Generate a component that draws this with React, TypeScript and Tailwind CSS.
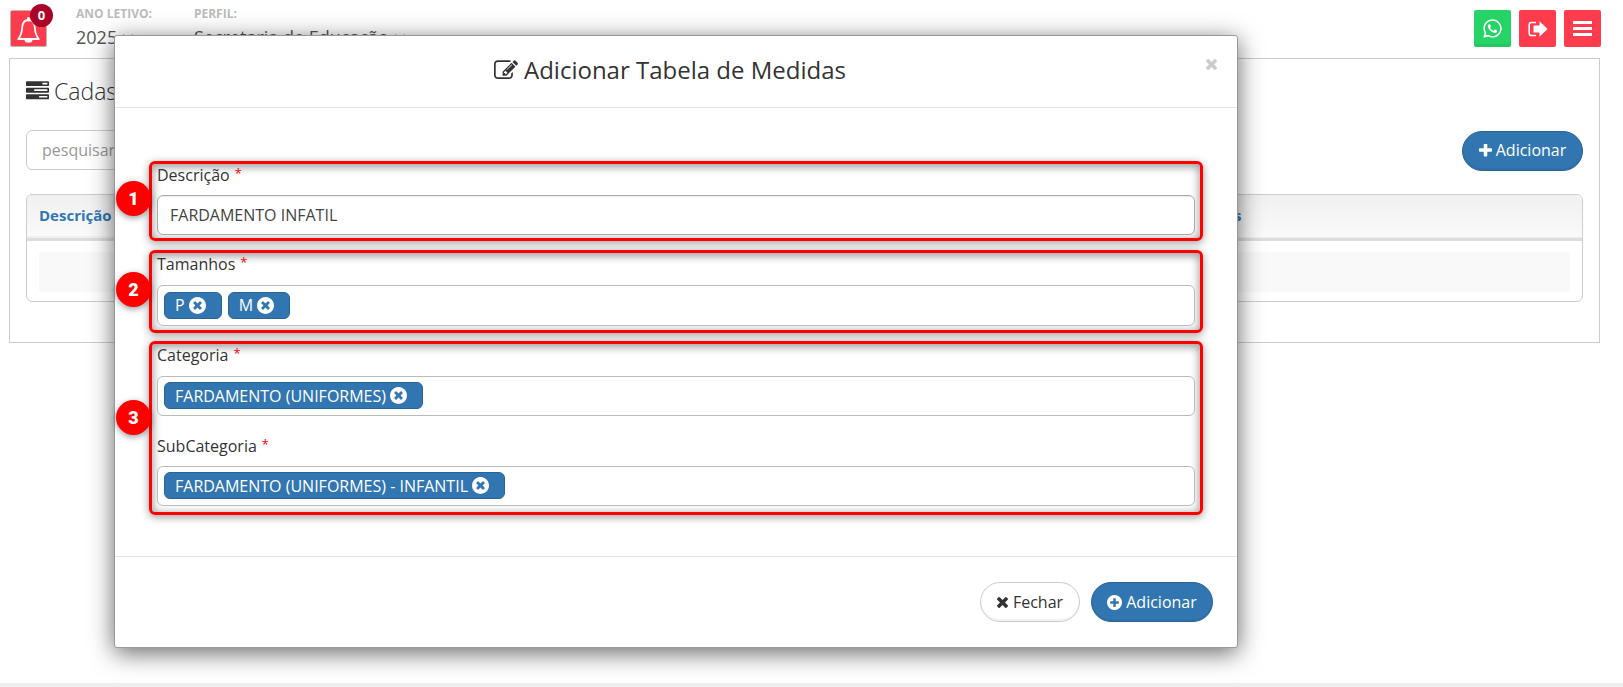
import React from "react";
import { FaWhatsapp } from "react-icons/fa";

const CIRCLE =
  "M1664 896q0 209-103 385.5t-279.5 279.5-385.5 103-385.5-103-279.5-279.5-103-385.5 103-385.5 279.5-279.5 385.5-103 385.5 103 279.5 279.5 103 385.5z";

const PATHS = {
  tasks:
    "M1024 1408h640v-128h-640v128zm-384-512h1024v-128h-1024v128zm640-512h384v-128h-384v128zm512 832v256q0 26-19 45t-45 19h-1664q-26 0-45-19t-19-45v-256q0-26 19-45t45-19h1664q26 0 45 19t19 45zm0-512v256q0 26-19 45t-45 19h-1664q-26 0-45-19t-19-45v-256q0-26 19-45t45-19h1664q26 0 45 19t19 45zm0-512v256q0 26-19 45t-45 19h-1664q-26 0-45-19t-19-45v-256q0-26 19-45t45-19h1664q26 0 45 19t19 45z",
  edit: "M888 1184l116-116-152-152-116 116v56h96v96h56zm440-720q-16-16-33 1l-350 350q-17 17-1 33t33-1l350-350q17-17 1-33zm80 594v190q0 119-84.5 203.5t-203.5 84.5h-832q-119 0-203.5-84.5t-84.5-203.5v-832q0-119 84.5-203.5t203.5-84.5h832q63 0 117 25 15 7 18 23 3 17-9 29l-49 49q-14 14-32 8-23-6-45-6h-832q-66 0-113 47t-47 113v832q0 66 47 113t113 47h832q66 0 113-47t47-113v-126q0-13 9-22l64-64q15-15 35-7t20 29zm-96-738l288 288-672 672h-288v-288zm444 132l-92 92-288-288 92-92q28-28 68-28t68 28l152 152q28 28 28 68t-28 68z",
  timesCircle:
    CIRCLE +
    "M1277 1122q0-26-19-45l-181-181 181-181q19-19 19-45 0-27-19-46l-90-90q-19-19-46-19-26 0-45 19l-181 181-181-181q-19-19-45-19-27 0-46 19l-90 90q-19 19-19 46 0 26 19 45l181 181-181 181q-19 19-19 45 0 27 19 46l90 90q19 19 46 19 26 0 45-19l181-181 181 181q19 19 45 19 27 0 46-19l90-90q19-19 19-46z",
  plusCircle:
    CIRCLE +
    "M1344 960v-128q0-26-19-45t-45-19h-256v-256q0-26-19-45t-45-19h-128q-26 0-45 19t-19 45v256h-256q-26 0-45 19t-19 45v128q0 26 19 45t45 19h256v256q0 26 19 45t45 19h128q26 0 45-19t19-45v-256h256q26 0 45-19t19-45z",
  plus: "M1600 736v192q0 40-28 68t-68 28h-416v416q0 40-28 68t-68 28h-192q-40 0-68-28t-28-68v-416h-416q-40 0-68-28t-28-68v-192q0-40 28-68t68-28h416v-416q0-40 28-68t68-28h192q40 0 68 28t28 68v416h416q40 0 68 28t28 68z",
  times:
    "M1490 1322q0 40-28 68l-136 136q-28 28-68 28t-68-28l-294-294-294 294q-28 28-68 28t-68-28l-136-136q-28-28-28-68t28-68l294-294-294-294q-28-28-28-68t28-68l136-136q28-28 68-28t68 28l294 294 294-294q28-28 68-28t68 28l136 136q28 28 28 68t-28 68l-294 294 294 294q28 28 28 68z",
};

function Icon({ name, box = "0 0 1792 1792", className }: { name: keyof typeof PATHS; box?: string; className: string }) {
  return (
    <svg viewBox={box} className={className} fill="currentColor" fillRule="evenodd" aria-hidden="true">
      <path d={PATHS[name]} />
    </svg>
  );
}

function Picker({ id, label, value }: { id: string; label: string; value: string }) {
  return (
    <div className="flex flex-col">
      <label htmlFor={id} className="text-[12px] leading-[18px] font-bold text-[#bbb]">
        {label}
      </label>
      <div className="mt-[2px] flex items-center gap-[5px] text-[#555]">
        <select id={id} className="appearance-none bg-transparent text-[18px] leading-[24px] field-sizing-content">
          <option>{value}</option>
        </select>
        <svg viewBox="0 0 12 7" className="h-[7px] w-3" fill="none" stroke="currentColor" strokeWidth="1.800" aria-hidden="true">
          <path d="M1 1l5 5 5-5" />
        </svg>
      </div>
    </div>
  );
}

function Callout({ n, badge, className, children }: { n: number; badge: string; className: string; children: React.ReactNode }) {
  return (
    <section
      className={`relative rounded-[6px] border-[3px] border-[#f00] px-[5px] shadow-[0_2px_8px_rgba(0,0,0,0.4),inset_0_2px_8px_1px_rgba(0,0,0,0.4)] ${className}`}
    >
      {children}
      <span
        className={`absolute -left-9 flex size-[35px] items-center justify-center rounded-full bg-[#f00] font-[Roboto,sans-serif] text-[18px] leading-[18px] font-black text-white shadow-[0_2px_6px_rgba(0,0,0,0.4)] ${badge}`}
      >
        {n}
      </span>
    </section>
  );
}

function FieldLabel({ htmlFor, children }: { htmlFor: string; children: React.ReactNode }) {
  return (
    <label htmlFor={htmlFor} className="flex h-[22px] items-start gap-[5px] text-base leading-[22px]">
      {children}
      <span className="text-[13px] leading-[19px] text-[#f00]">*</span>
    </label>
  );
}

function TagBox({ id, tags, className }: { id: string; tags: string[]; className: string }) {
  return (
    <div className={`flex items-center gap-[6px] rounded-[6px] border border-[#bbb] bg-white px-[6px] pb-px ${className}`}>
      {tags.map((tag) => (
        <span
          key={tag}
          className="flex h-[27px] shrink-0 items-center gap-1 rounded-[6px] border border-[#2a6496] bg-[#3276b1] pr-[15px] pl-[10px] text-base leading-[24px] font-medium text-white"
        >
          {tag}
          <button type="button" aria-label={`Remover ${tag}`}>
            <Icon name="timesCircle" box="128 128 1536 1536" className="size-[17px]" />
          </button>
        </span>
      ))}
      <input id={id} className="min-w-0 flex-1 outline-none" />
    </div>
  );
}

const BLUE_BTN =
  "flex h-10 items-center rounded-full border border-[#2a6496] bg-[#3276b1] text-base text-white shadow-[inset_0_-2px_0_rgba(0,0,0,0.05)]";

export default function App() {
  return (
    <div className="relative min-h-screen bg-[#eee] font-['Open_Sans',sans-serif] text-[#333]">
      <div className="min-h-[683px] bg-white pr-[23px] pl-[9px]">
        <header className="flex h-[58px] items-start">
          <button type="button" aria-label="Notificações" className="relative mt-[10px] ml-px size-[37px] rounded-[2px] border border-[#bbb] bg-[#ff3b4e]">
            <svg viewBox="0 0 35 35" className="absolute inset-0 size-full" fill="none" stroke="#fff" strokeWidth="1.8" aria-hidden="true">
              <path d="M17.500 9c-4.300 0-6 3-6.300 7.500-.3 5.500-1.300 8.500-4 11.500h20.600c-2.700-3-3.700-6-4-11.500C23.500 12 21.800 9 17.500 9z" strokeLinejoin="round" />
              <path d="M14.400 28.500a3.100 2.400 0 0 0 6.200 0z" fill="#fff" />
              <path d="M17.500 7.500v1.500" strokeWidth="3" strokeLinecap="round" />
            </svg>
            <span className="absolute -top-[7px] left-[19px] flex size-[23px] items-center justify-center rounded-full bg-[#a90329] text-[13px] font-bold text-white">
              0
            </span>
          </button>
          <div className="mt-[5px] ml-[29px] flex gap-[42px]">
            <Picker id="ano" label="ANO LETIVO:" value="2025" />
            <Picker id="perfil" label="PERFIL:" value="Secretaria de Educação" />
          </div>
          <nav className="mt-[10px] -mr-px ml-auto flex gap-2 text-white">
            <button type="button" aria-label="WhatsApp" className="flex size-[37px] items-center justify-center rounded-[2px] bg-[#25d366] shadow-[inset_0_-3px_0_rgba(0,0,0,0.05)]">
              <FaWhatsapp className="size-[21px]" />
            </button>
            <button type="button" aria-label="Sair" className="flex size-[37px] items-center justify-center rounded-[2px] bg-[#ff3b4e]">
              <svg viewBox="0 0 20 16" className="h-4 w-5" aria-hidden="true">
                <path d="M8 1.500H3.500a2.300 2.300 0 0 0-2.300 2.300v8.400a2.300 2.300 0 0 0 2.300 2.300H8" fill="none" stroke="#fff" strokeWidth="1.600" />
                <path d="M5.500 4.500h6V.300L19.600 8l-8.100 7.700V11.500h-6z" fill="#fff" />
              </svg>
            </button>
            <button type="button" aria-label="Menu" className="flex size-[37px] items-center justify-center rounded-[2px] bg-[#ff3b4e]">
              <svg viewBox="0 0 19 15" className="h-[15px] w-[19px]" fill="#fff" aria-hidden="true">
                <path d="M0 0h19v3H0zM0 6h19v3H0zM0 12h19v3H0z" />
              </svg>
            </button>
          </nav>
        </header>

        <main className="border border-[#ccc] px-4 pt-4 pb-10">
          <h1 className="flex h-8 items-center gap-[5px] text-[23px] font-light">
            <Icon name="tasks" box="0 128 1792 1536" className="h-5 w-[23px]" />
            Cadastros
          </h1>
          <div className="mt-[23px] flex items-start justify-between">
            <input
              aria-label="pesquisar"
              placeholder="pesquisar"
              className="h-10 w-[300px] rounded-[6px] border border-[#ccc] px-[15px] text-base outline-none placeholder:text-[#999]"
            />
            <button type="button" className={`mt-px w-[121px] justify-center gap-1 pb-[2px] ${BLUE_BTN}`}>
              <Icon name="plus" box="192 192 1408 1408" className="size-[13px]" />
              Adicionar
            </button>
          </div>
          <div className="mt-[23px] overflow-hidden rounded-[6px] border border-[#ccc]">
            <table className="w-full border-collapse">
              <thead>
                <tr className="h-[44px] border-b-[3px] border-[#ddd] bg-linear-to-b from-[#f0f0f0] to-[#fafafa] text-left text-[15px] text-[#3276b1]">
                  <th className="px-3 pb-[2px] font-bold">Descrição</th>
                  <th className="w-[26%] px-5 pb-[2px] font-bold">Ações</th>
                </tr>
              </thead>
              <tbody>
                <tr>
                  <td colSpan={2} className="px-3 pt-[11px] pb-[9px]">
                    <div className="h-10 bg-[#f9f9f9]" />
                  </td>
                </tr>
              </tbody>
            </table>
          </div>
        </main>
      </div>

      <div className="absolute inset-x-0 top-[35px] pr-[385px] pl-[114px]">
        <div role="dialog" aria-labelledby="dialog-title" className="rounded-[3px] border border-[#999] bg-white shadow-[0_5px_25px_rgba(0,0,0,0.6)]">
          <header className="relative flex h-[72px] items-center justify-center border-b border-[#e5e5e5]">
            <h2 id="dialog-title" className="flex items-center gap-[6px] pr-3 pb-[3px] text-[24px] leading-8">
              <Icon name="edit" box="0 128 1792 1536" className="h-[21px] w-6" />
              Adicionar Tabela de Medidas
            </h2>
            <button type="button" aria-label="Fechar janela" className="absolute top-[23px] right-5 text-[#ccc]">
              <Icon name="times" box="302 366 1188 1188" className="size-[11px]" />
            </button>
          </header>

          <form className="flex flex-col pt-[53px] pr-[34px] pb-[41px] pl-[34px]">
            <Callout n={1} badge="top-[17px]" className="pb-[3px]">
              <FieldLabel htmlFor="descricao">Descrição</FieldLabel>
              <input
                id="descricao"
                defaultValue="FARDAMENTO INFATIL"
                className="mt-[9px] block h-10 w-full rounded-[6px] border border-[#aaa] bg-white px-3 text-base text-[#444] shadow-[inset_0_1px_1px_rgba(0,0,0,0.08)] outline-none"
              />
            </Callout>
            <Callout n={2} badge="top-[19px]" className="mt-[9px] pb-1">
              <FieldLabel htmlFor="tamanhos">Tamanhos</FieldLabel>
              <TagBox id="tamanhos" tags={["P", "M"]} className="mt-[10px] h-[41px]" />
            </Callout>
            <Callout n={3} badge="top-14" className="mt-2 pb-[6px]">
              <FieldLabel htmlFor="categoria">Categoria</FieldLabel>
              <TagBox id="categoria" tags={["FARDAMENTO (UNIFORMES)"]} className="mt-[10px] mb-[19px] h-10" />
              <FieldLabel htmlFor="subcategoria">SubCategoria</FieldLabel>
              <TagBox id="subcategoria" tags={["FARDAMENTO (UNIFORMES) - INFANTIL"]} className="mt-[9px] h-10" />
            </Callout>
          </form>

          <footer className="flex justify-end gap-[11px] border-t border-[#e5e5e5] px-6 py-[25px]">
            <button type="button" className="flex h-10 w-[100px] items-center justify-center gap-[5px] rounded-full border border-[#ccc] text-base shadow-[inset_0_-2px_0_rgba(0,0,0,0.05)]">
              <Icon name="times" box="302 366 1188 1188" className="size-[11px]" />
              Fechar
            </button>
            <button type="button" className={`w-[122px] justify-center gap-1 ${BLUE_BTN}`}>
              <Icon name="plusCircle" box="128 128 1536 1536" className="size-[15px]" />
              Adicionar
            </button>
          </footer>
        </div>
      </div>
    </div>
  );
}
